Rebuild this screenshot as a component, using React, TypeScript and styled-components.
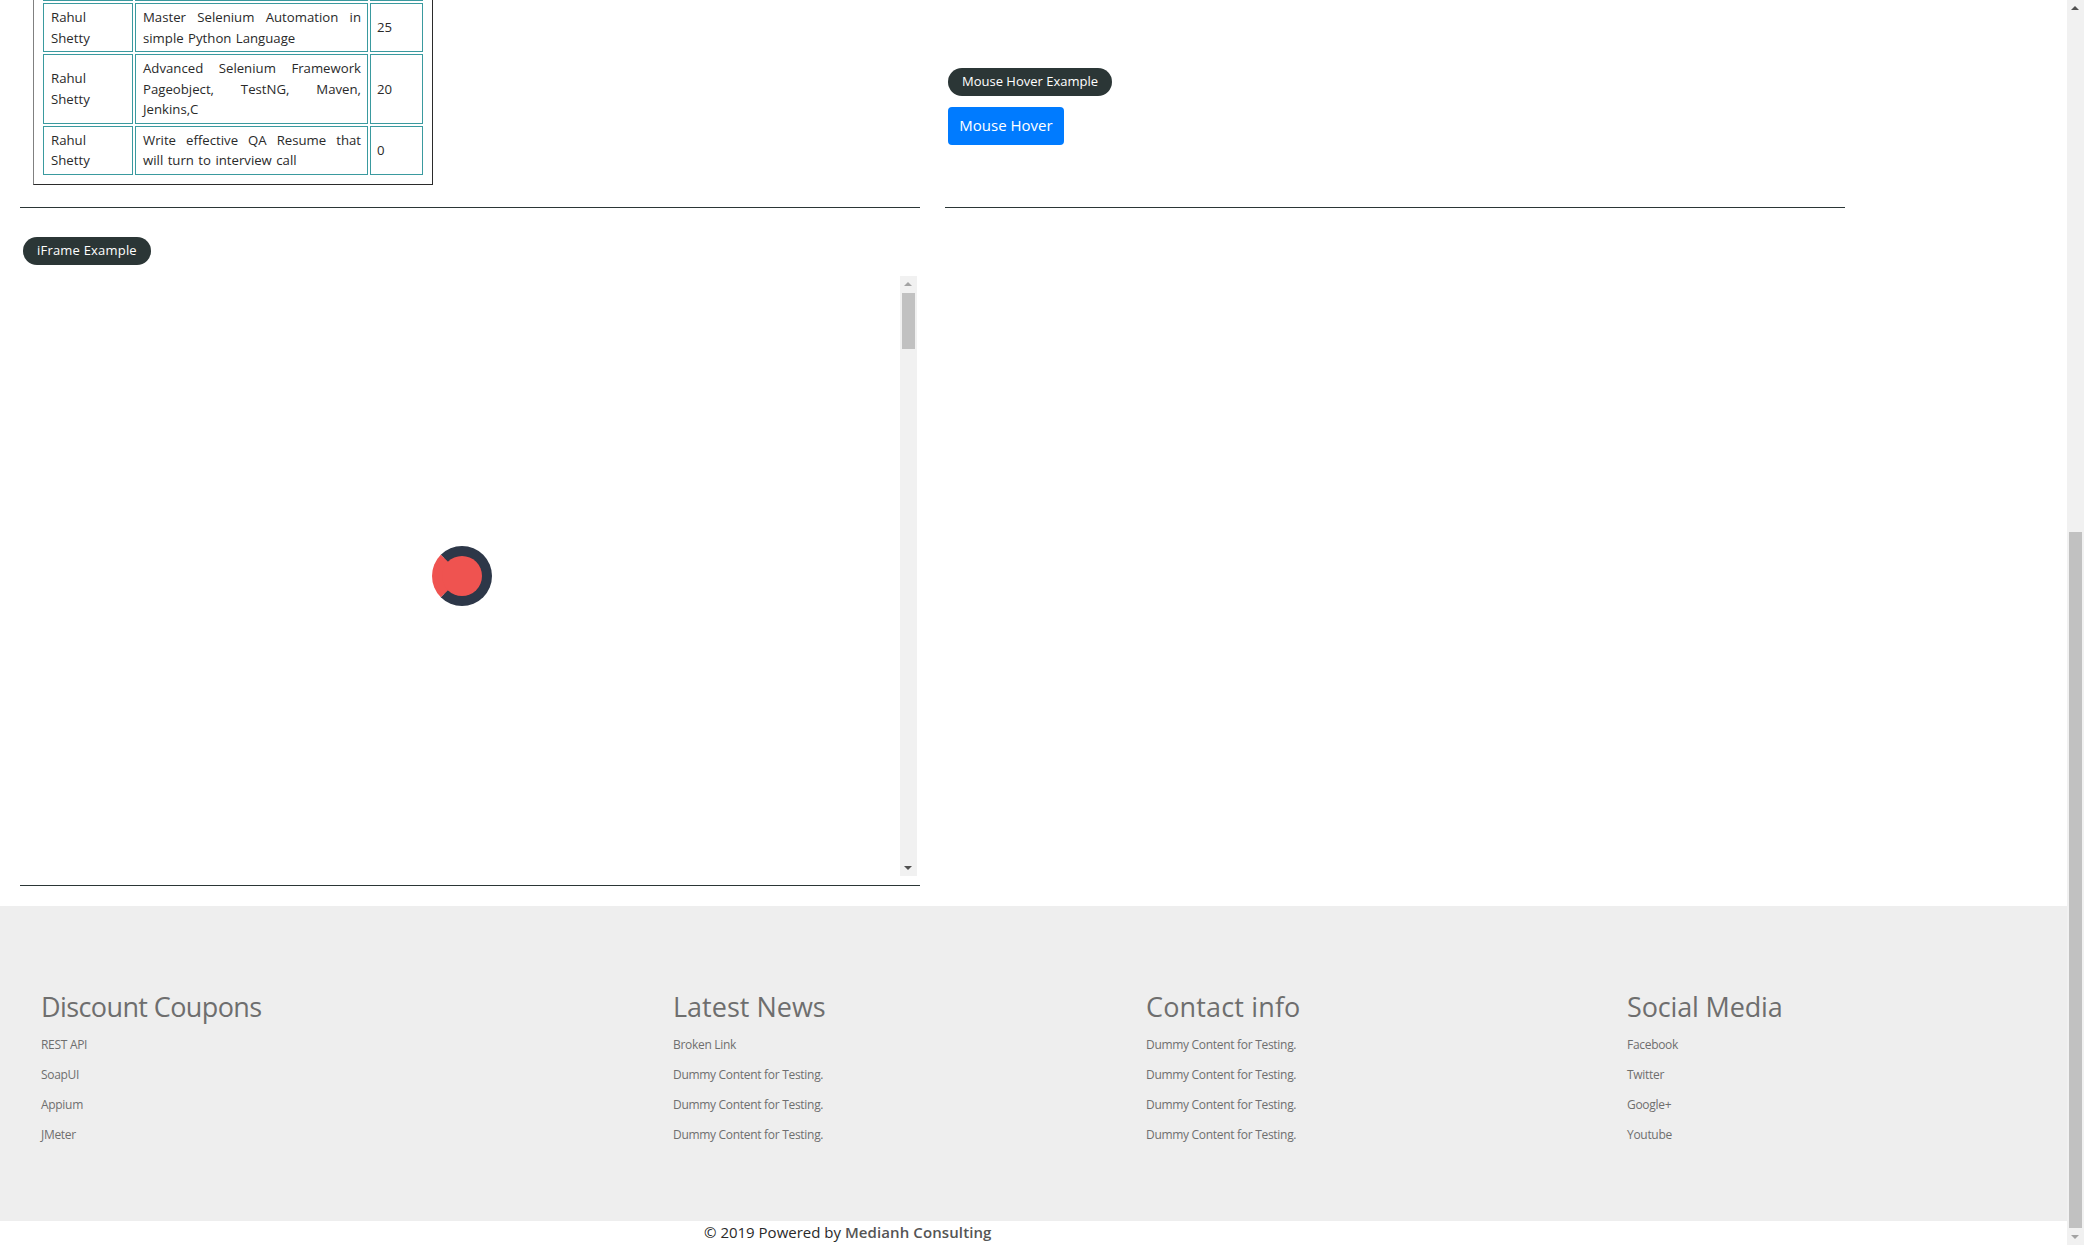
import React from 'react';
import styled, { createGlobalStyle } from 'styled-components';

const GlobalStyle = createGlobalStyle`
   html, body {
      margin: 0;
      padding: 0;
      background: #fff;
      overflow: hidden;
   }
   * {
      box-sizing: border-box;
   }
`;

const font = `'Open Sans', 'Noto Sans', sans-serif`;

const Shell = styled.div`
   display: flex;
   width: 2084px;
   height: 1245px;
   overflow: hidden;
   font-family: ${font};
`;

const Main = styled.div`
   width: 2067px;
   height: 1245px;
   overflow: hidden;
`;

const PageBar = styled.div`
   position: relative;
   width: 17px;
   height: 1245px;
   background: #f1f1f1;
`;

const PageThumb = styled.div`
   position: absolute;
   left: 2px;
   top: 532px;
   width: 13px;
   height: 696px;
   background: #c1c1c1;
`;

const Arrow = styled.div<{ $dir: 'up' | 'down'; $muted?: boolean }>`
   position: absolute;
   left: 4px;
   width: 0;
   height: 0;
   border-left: 4px solid transparent;
   border-right: 4px solid transparent;
   ${(p) =>
      p.$dir === 'up'
         ? `top: 6px; border-bottom: 4px solid ${p.$muted ? '#a3a3a3' : '#505050'};`
         : `bottom: 6px; border-top: 4px solid ${p.$muted ? '#a3a3a3' : '#505050'};`}
`;

const Columns = styled.div`
   display: grid;
   grid-template-columns: 900px 900px;
   column-gap: 25px;
   padding-left: 20px;
`;

const TopColumns = styled(Columns)`
   height: 208px;
`;

const Left = styled.div`
   min-width: 0;
`;

const CourseFrame = styled.div`
   margin: -51px 0 0 13px;
   width: 400px;
   height: 236px;
   padding: 9px 7px;
   border: 1px solid #2b2b2b;
   border-left-color: #808080;
`;

const CourseTable = styled.table`
   border-collapse: separate;
   border-spacing: 2px;
   table-layout: fixed;
   width: 384px;
   color: #2a2a2a;
   font-size: 13.2px;
   line-height: 20.5px;
`;

const Td = styled.td<{ $justify?: boolean; $name?: boolean; $spacer?: boolean }>`
   border: 1px solid #3a9a9f;
   padding: ${(p) => (p.$name ? '3px 20px 3px 7px' : p.$justify ? '3px 6px 3px 7px' : '3px 6px')};
   height: ${(p) => (p.$spacer ? '40px' : 'auto')};
   text-align: ${(p) => (p.$justify ? 'justify' : 'left')};
   word-spacing: ${(p) => (p.$justify ? '1px' : '0')};
`;

const Rule = styled.div`
   height: 1px;
   background: #2b3636;
`;

const TopRule = styled(Rule)`
   margin-top: 22px;
`;

const Pill = styled.div<{ $track?: boolean }>`
   display: inline-block;
   height: 28px;
   padding: 0 14px;
   border-radius: 14px;
   background: #2b3636;
   color: #fff;
   font-size: 13px;
   line-height: 27px;
   letter-spacing: ${(p) => (p.$track ? '0.2px' : '0')};
   white-space: nowrap;
`;

const HoverCol = styled.div`
   display: flex;
   flex-direction: column;
   align-items: flex-start;
   padding: 68px 0 0 3px;
   height: 207px;
   gap: 11px;
`;

const HoverWrap = styled.div`
   height: 208px;
   border-bottom: 1px solid #2b3636;
`;

const HoverButton = styled.button`
   width: 116px;
   height: 38px;
   border: 0;
   border-radius: 4px;
   background: #007bff;
   color: #fff;
   font-family: ${font};
   font-size: 15px;
   padding: 0 0 2px;
`;

const FrameSection = styled.div`
   padding-top: 29px;
`;

const PillIndent = styled.div`
   padding-left: 3px;
   height: 39px;
`;

const FrameBody = styled.div`
   display: flex;
   height: 600px;
   width: 897px;
`;

const FrameCanvas = styled.div`
   flex: 1;
   display: flex;
   align-items: center;
   justify-content: center;
`;

const Spinner = styled.div`
   width: 60px;
   height: 60px;
   margin-left: 4px;
   border: 10px solid #2d3748;
   border-left-color: #ef5350;
   border-radius: 50%;
   background: #ef5350;
`;

const FrameBar = styled.div`
   position: relative;
   width: 17px;
   height: 600px;
   background: #f1f1f1;
`;

const FrameThumb = styled.div`
   position: absolute;
   left: 2px;
   top: 17px;
   width: 13px;
   height: 56px;
   background: #c1c1c1;
`;

const FrameRule = styled(Rule)`
   margin-top: 9px;
`;

const Footer = styled.footer`
   display: grid;
   grid-template-columns: 632px 473px 481px 1fr;
   height: 315px;
   margin-top: 20px;
   padding: 81px 0 0 41px;
   background: #eeeeee;
`;

const FooterTitle = styled.h3<{ $tracking: number }>`
   margin: 0 0 3px;
   color: #6e6e6e;
   font-size: 27px;
   font-weight: 400;
   line-height: 40px;
   letter-spacing: ${(p) => p.$tracking}px;
`;

const FooterLink = styled.a`
   display: block;
   height: 30px;
   color: #6e6e6e;
   font-size: 12px;
   line-height: 30px;
   letter-spacing: -0.3px;
`;

const Copyright = styled.div`
   padding-left: 704px;
   height: 24px;
   color: #2a2a2a;
   font-size: 15px;
   line-height: 22px;
`;

const CopyrightName = styled.a`
   color: #555;
   font-weight: 600;
   letter-spacing: 0.1px;
`;

const courses = [
   ['Rahul Shetty', 'Master Selenium Automation in simple Python Language', '25'],
   ['Rahul Shetty', 'Advanced Selenium Framework Pageobject, TestNG, Maven, Jenkins,C', '20'],
   ['Rahul Shetty', 'Write effective QA Resume that will turn to interview call', '0'],
];

const footerColumns = [
   { title: 'Discount Coupons', tracking: -0.6, links: ['REST API', 'SoapUI', 'Appium', 'JMeter'] },
   {
      title: 'Latest News',
      tracking: 0,
      links: ['Broken Link', 'Dummy Content for Testing.', 'Dummy Content for Testing.', 'Dummy Content for Testing.'],
   },
   {
      title: 'Contact info',
      tracking: 0.15,
      links: [
         'Dummy Content for Testing.',
         'Dummy Content for Testing.',
         'Dummy Content for Testing.',
         'Dummy Content for Testing.',
      ],
   },
   { title: 'Social Media', tracking: -0.15, links: ['Facebook', 'Twitter', 'Google+', 'Youtube'] },
];

export default function App(): JSX.Element {
   return (
      <Shell>
         <GlobalStyle />
         <Main>
            <TopColumns>
               <Left>
                  <CourseFrame>
                     <CourseTable>
                        <colgroup>
                           <col style={{ width: 90 }} />
                           <col style={{ width: 233 }} />
                           <col style={{ width: 53 }} />
                        </colgroup>
                        <tbody>
                           <tr>
                              <Td $spacer />
                              <Td />
                              <Td />
                           </tr>
                           {courses.map((row) => (
                              <tr key={row[1]}>
                                 <Td $name>{row[0]}</Td>
                                 <Td $justify>{row[1]}</Td>
                                 <Td>{row[2]}</Td>
                              </tr>
                           ))}
                        </tbody>
                     </CourseTable>
                  </CourseFrame>
                  <TopRule />
               </Left>
               <HoverWrap>
                  <HoverCol>
                     <Pill>Mouse Hover Example</Pill>
                     <HoverButton>Mouse Hover</HoverButton>
                  </HoverCol>
               </HoverWrap>
            </TopColumns>
            <Columns>
               <FrameSection>
                  <PillIndent>
                     <Pill $track>iFrame Example</Pill>
                  </PillIndent>
                  <FrameBody>
                     <FrameCanvas>
                        <Spinner />
                     </FrameCanvas>
                     <FrameBar>
                        <Arrow $dir="up" $muted />
                        <FrameThumb />
                        <Arrow $dir="down" />
                     </FrameBar>
                  </FrameBody>
                  <FrameRule />
               </FrameSection>
            </Columns>
            <Footer>
               {footerColumns.map((col) => (
                  <div key={col.title}>
                     <FooterTitle $tracking={col.tracking}>{col.title}</FooterTitle>
                     {col.links.map((link, i) => (
                        <FooterLink key={i}>{link}</FooterLink>
                     ))}
                  </div>
               ))}
            </Footer>
            <Copyright>
               © 2019 Powered by <CopyrightName>Medianh Consulting</CopyrightName>
            </Copyright>
         </Main>
         <PageBar>
            <Arrow $dir="up" />
            <PageThumb />
            <Arrow $dir="down" $muted />
         </PageBar>
      </Shell>
   );
}
